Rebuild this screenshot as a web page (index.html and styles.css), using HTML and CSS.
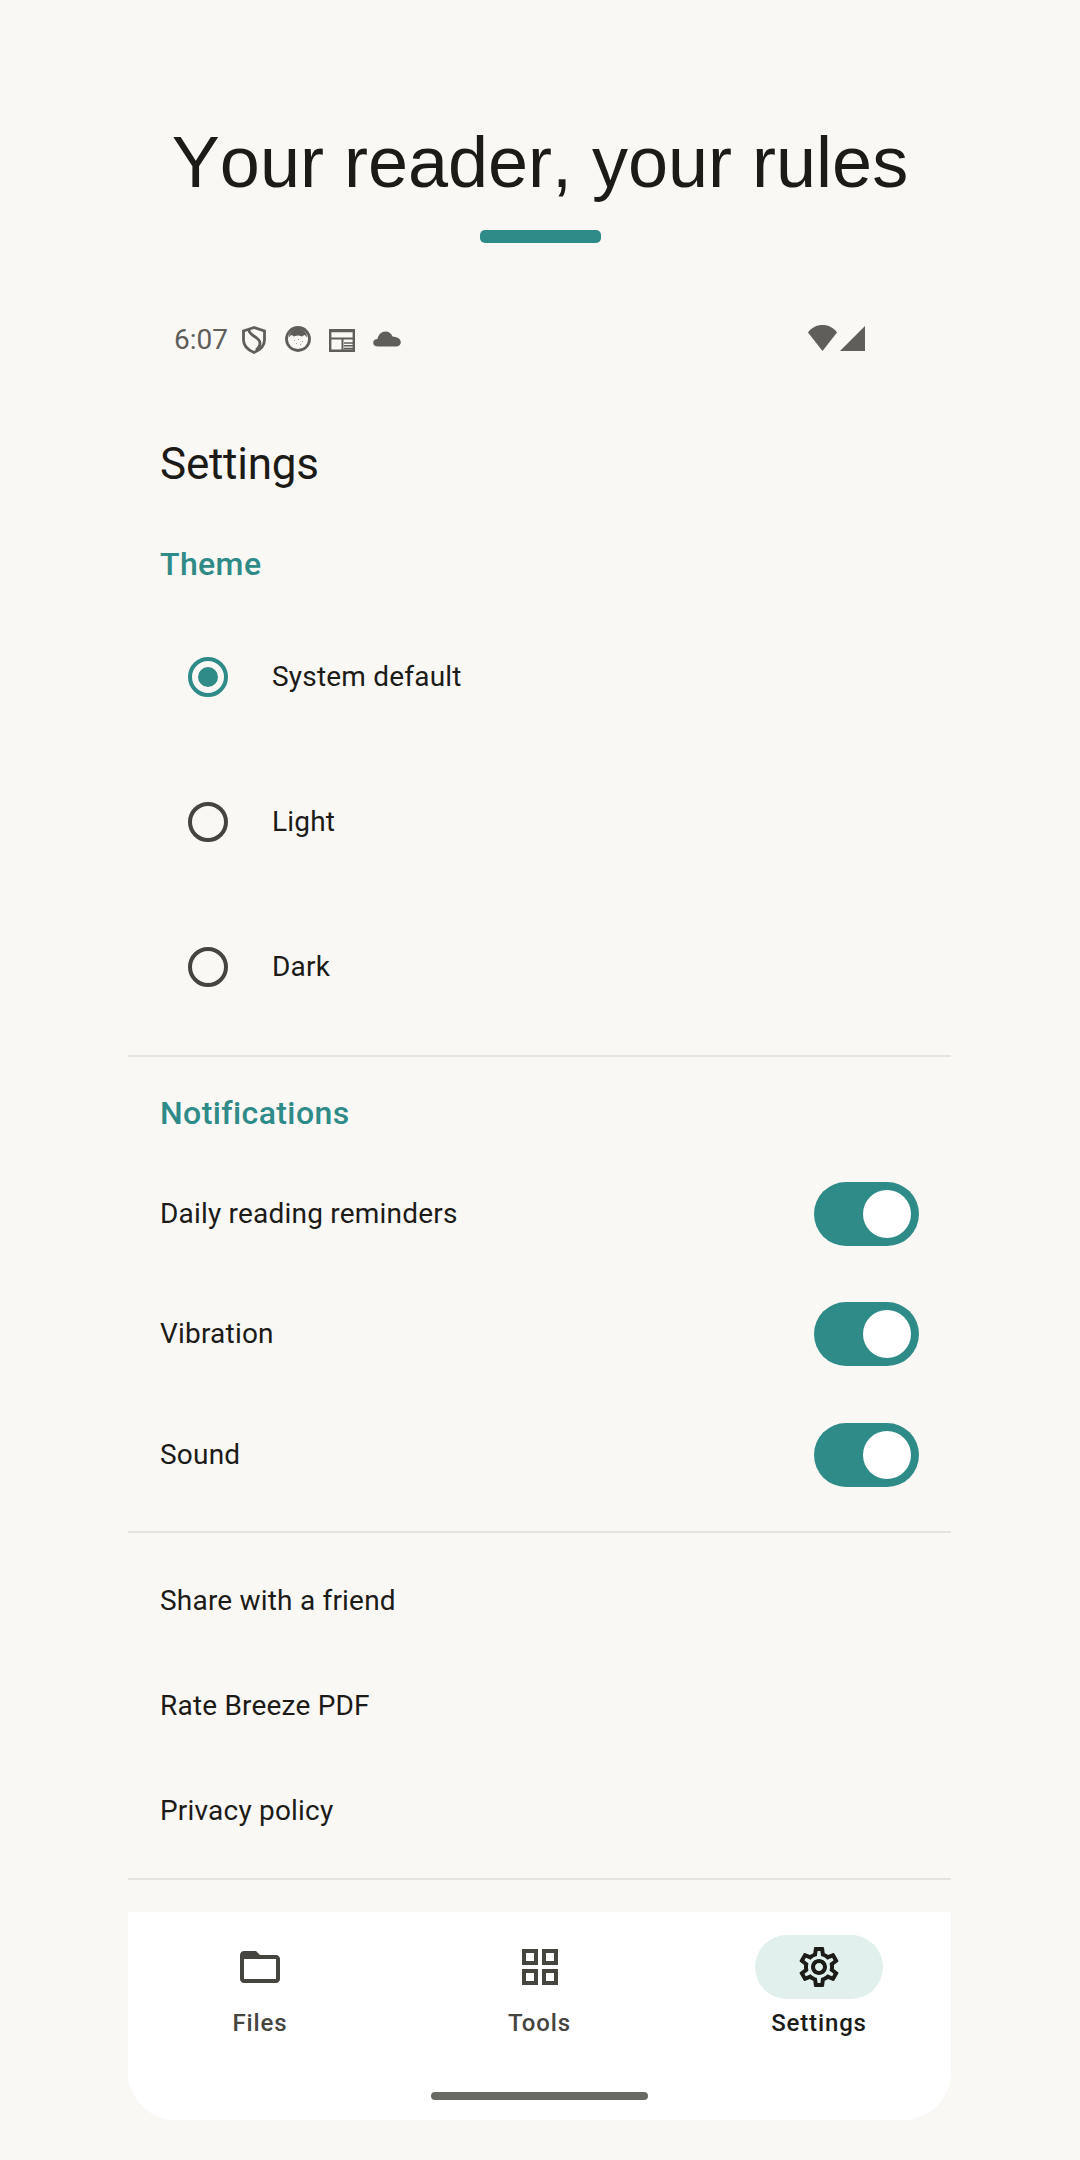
FILE: index.html
```html
<!DOCTYPE html>
<html lang="en">
<head>
<meta charset="utf-8">
<title>Your reader, your rules</title>
<link rel="stylesheet" href="styles.css">
</head>
<body>
<header class="hero">
  <h1 class="hero-title">Your reader, your rules</h1>
  <div class="hero-bar"></div>
</header>
<main class="phone">
  <div class="status">
    <span class="status-time">6:07</span>
    <svg class="status-icon" viewBox="0 0 24 28"><path d="M12 1.500 1.500 5v9c0 6 4.500 10 10.500 12.500C18 24 22.500 20 22.500 14V5z" fill="none" stroke="#5f5e5a" stroke-width="2.800"/><path d="M7 4c0 6 11 7 11 13 0 3-2 5.500-4 7" fill="none" stroke="#5f5e5a" stroke-width="2.800"/></svg>
    <svg class="status-icon status-face" viewBox="0 0 26 26"><circle cx="13" cy="13" r="11.500" fill="#faf8f5" stroke="#5f5e5a" stroke-width="2.800"/><path d="M4 11c0-4.500 4-8.500 9-8.500s9 4 9 8.500c-1 0-1.500-2-2.500-2s-1.500 1.500-2.500 1.500-1.500-1-4-1-3 1-4 1-1.500-1.500-2.500-1.500S5 11 4 11z" fill="#5f5e5a"/><path d="M9 14h1v1H9zM13 13h1v1h-1zM17 15h1v1h-1zM11 17h1v1h-1zM15 18h1v1h-1z" fill="#a3a29d"/></svg>
    <svg class="status-icon status-cal" viewBox="0 0 26 23"><path d="M1.200 2h23.600v19.800H1.200z" fill="none" stroke="#5f5e5a" stroke-width="2.400"/><path d="M0 0h26v2.500H0zM1 8.500h24v2H1zM12.500 10h2v11h-2zM15 13.200h9v1.600h-9zM15 16h9v1.600h-9zM15 18.800h9v1.600h-9z" fill="#5f5e5a"/></svg>
    <svg class="status-cloud" viewBox="0 0 28 16"><path d="M5 15.500C2 15.500.2 14 .2 11.700c0-2.200 1.800-3.800 4.300-3.800C5.500 3.500 8.500.5 12.500.5c3.500 0 6 2 7 5 4 .3 8.300 2 8.300 5.700 0 2.800-2.300 4.300-5.300 4.300z" fill="#5f5e5a"/></svg>
    <span class="status-spacer"></span>
    <svg class="status-wifi" viewBox="0 0 29 26"><path d="M14.500 26 0 7.500C3.500 2.500 8.500 0 14.500 0S25.500 2.500 29 7.500z" fill="#5f5e5a"/></svg>
    <svg class="status-signal" viewBox="0 0 25 25"><path d="M25 0v25H0z" fill="#5f5e5a"/></svg>
  </div>

  <h2 class="page-title">Settings</h2>

  <section class="group group-theme">
    <h3 class="group-title">Theme</h3>
    <div class="radio-row"><span class="radio radio-on"></span><span class="row-label">System default</span></div>
    <div class="radio-row"><span class="radio"></span><span class="row-label">Light</span></div>
    <div class="radio-row"><span class="radio"></span><span class="row-label">Dark</span></div>
  </section>

  <section class="group group-notify">
    <h3 class="group-title">Notifications</h3>
    <div class="toggle-row"><span class="row-label">Daily reading reminders</span><span class="toggle"><span class="toggle-thumb"></span></span></div>
    <div class="toggle-row"><span class="row-label">Vibration</span><span class="toggle"><span class="toggle-thumb"></span></span></div>
    <div class="toggle-row"><span class="row-label">Sound</span><span class="toggle"><span class="toggle-thumb"></span></span></div>
  </section>

  <section class="group group-links">
    <div class="link-row"><span class="row-label">Share with a friend</span></div>
    <div class="link-row"><span class="row-label">Rate Breeze PDF</span></div>
    <div class="link-row"><span class="row-label">Privacy policy</span></div>
  </section>

  <nav class="nav">
    <div class="nav-items">
      <div class="nav-item">
        <span class="nav-pill">
          <svg class="nav-icon" viewBox="0 0 24 24"><path d="M20 6h-8l-2-2H4c-1.100 0-2 .9-2 2v12c0 1.100.9 2 2 2h16c1.100 0 2-.9 2-2V8c0-1.100-.9-2-2-2zm0 12H4V8h16v10z" fill="#45443f"/></svg>
        </span>
        <span class="nav-label">Files</span>
      </div>
      <div class="nav-item">
        <span class="nav-pill">
          <svg class="nav-icon" viewBox="0 0 24 24"><path d="M3 3v8h8V3H3zm6 6H5V5h4v4zm-6 4v8h8v-8H3zm6 6H5v-4h4v4zm4-16v8h8V3h-8zm6 6h-4V5h4v4zm-6 4v8h8v-8h-8zm6 6h-4v-4h4v4z" fill="#45443f"/></svg>
        </span>
        <span class="nav-label">Tools</span>
      </div>
      <div class="nav-item">
        <span class="nav-pill nav-pill-active">
          <svg class="nav-icon" viewBox="0 0 24 24"><path d="M19.430 12.980c.04-.32.07-.64.07-.98 0-.34-.03-.66-.07-.98l2.110-1.650c.19-.15.24-.42.12-.64l-2-3.460c-.09-.16-.26-.25-.44-.25-.06 0-.12.01-.17.03l-2.490 1c-.52-.4-1.080-.73-1.690-.98l-.38-2.650C14.460 2.180 14.250 2 14 2h-4c-.25 0-.46.18-.49.42l-.38 2.650c-.61.25-1.170.59-1.690.98l-2.490-1c-.06-.02-.12-.03-.18-.03-.17 0-.34.09-.43.25l-2 3.460c-.13.22-.07.49.12.64l2.110 1.650c-.04.32-.07.65-.07.98 0 .33.03.66.07.98l-2.110 1.650c-.19.15-.24.42-.12.64l2 3.460c.09.16.26.25.44.25.06 0 .12-.01.17-.03l2.490-1c.52.4 1.080.73 1.690.98l.38 2.650c.03.24.24.42.49.42h4c.25 0 .46-.18.49-.42l.38-2.650c.61-.25 1.170-.59 1.690-.98l2.490 1c.06.02.12.03.18.03.17 0 .34-.09.43-.25l2-3.460c.12-.22.07-.49-.12-.64l-2.110-1.650zm-1.980-1.710c.04.31.05.52.05.73 0 .21-.02.43-.05.73l-.14 1.130.89.7 1.080.84-.7 1.210-1.270-.51-1.040-.42-.9.68c-.43.32-.84.56-1.250.73l-1.060.43-.16 1.130-.2 1.350h-1.400l-.19-1.350-.16-1.130-1.060-.43c-.43-.18-.83-.41-1.230-.71l-.91-.7-1.060.43-1.270.51-.7-1.210 1.080-.84.89-.7-.14-1.130c-.03-.31-.05-.54-.05-.74s.02-.43.05-.73l.14-1.130-.89-.7-1.080-.84.7-1.210 1.270.51 1.040.42.9-.68c.43-.32.84-.56 1.250-.73l1.060-.43.16-1.130.2-1.350h1.390l.19 1.350.16 1.130 1.060.43c.43.18.83.41 1.230.71l.91.7 1.060-.43 1.270-.51.7 1.210-1.070.85-.89.7.14 1.130zM12 8c-2.210 0-4 1.790-4 4s1.790 4 4 4 4-1.790 4-4-1.790-4-4-4zm0 6c-1.100 0-2-.9-2-2s.9-2 2-2 2 .9 2 2-.9 2-2 2z" fill="#1c1b18"/></svg>
        </span>
        <span class="nav-label nav-label-active">Settings</span>
      </div>
    </div>
    <div class="home-bar"></div>
  </nav>
</main>
</body>
</html>
```
FILE: styles.css
```css
* { box-sizing: border-box; }
html, body { margin: 0; padding: 0; }
body {
  width: 1080px;
  height: 2160px;
  background: #faf8f5;
  color: #1c1b18;
  font-family: Roboto, "Noto Sans", sans-serif;
  overflow: hidden;
}
.hero {
  height: 243px;
  padding-top: 119px;
  display: flex;
  flex-direction: column;
  align-items: center;
}
.hero-title {
  margin: 0;
  height: 86px;
  font: 400 72px/86px "Liberation Sans", Arial, sans-serif;
  font-kerning: none;
  color: #1c1b18;
}
.hero-bar {
  margin-top: 25px;
  width: 121px;
  height: 13px;
  border-radius: 5px;
  background: #2e8b88;
}
.phone {
  width: 823px;
  margin: 0 0 0 128px;
  display: flex;
  flex-direction: column;
}
.status {
  height: 62px;
  margin-top: 66px;
  padding: 0 86px 0 46px;
  display: flex;
  align-items: center;
  gap: 18px;
  color: #5f5e5a;
}
.status-time { font-size: 28px; line-height: 36px; width: 49px; }
.status-icon { width: 26px; height: 28px; }
.status-face { margin-bottom: 2px; }
.status-cal { height: 23px; }
.status-cloud { width: 28px; height: 16px; margin-bottom: 3px; }
.status-spacer { flex: 1; }
.status-wifi { width: 29px; height: 26px; margin-right: -15px; margin-bottom: 4px; }
.status-signal { width: 25px; height: 25px; margin-bottom: 3px; }
.page-title {
  margin: 67px 0 0 32px;
  font-size: 44px;
  line-height: 52px;
  font-weight: 400;
  letter-spacing: -0.25px;
}
.group { border-bottom: 2px solid #e4e3df; }
.group-title {
  margin: 0 0 0 32px;
  color: #2e8b88;
  font-size: 32px;
  line-height: 40px;
  font-weight: 500;
  letter-spacing: 0.4px;
}
.group-theme { margin-top: 54px; height: 512.500px; }
.group-notify { padding-top: 36px; height: 476px; }
.group-links { padding-top: 16px; height: 347px; }
.radio-row {
  height: 145px;
  display: flex;
  align-items: center;
  padding-left: 60px;
}
.group-theme .group-title { margin-bottom: 20px; }
.radio {
  width: 40px;
  height: 40px;
  border: 4.500px solid #45443f;
  border-radius: 50%;
  margin-right: 44px;
  display: flex;
  align-items: center;
  justify-content: center;
}
.radio-on { border-color: #2e8b88; }
.radio-on::after {
  content: "";
  width: 20px;
  height: 20px;
  border-radius: 50%;
  background: #2e8b88;
}
.row-label { font-size: 28px; line-height: 36px; letter-spacing: 0.2px; color: #1c1b18; }
.toggle-row {
  height: 120.500px;
  display: flex;
  align-items: center;
  justify-content: space-between;
  padding: 0 32px;
}
.group-notify .group-title { margin-bottom: 21px; }
.toggle {
  width: 105px;
  height: 64px;
  border-radius: 32px;
  background: #2e8b88;
  display: flex;
  align-items: center;
  justify-content: flex-end;
  padding-right: 8px;
}
.toggle-thumb { width: 48px; height: 48px; border-radius: 50%; background: #fff; }
.link-row {
  height: 105px;
  display: flex;
  align-items: center;
  padding: 0 32px;
}
.nav {
  margin-top: 32px;
  height: 208px;
  background: #fff;
  border-radius: 0 0 48px 48px;
  display: flex;
  flex-direction: column;
  align-items: center;
}
.nav-items {
  width: 100%;
  display: grid;
  grid-template-columns: repeat(3, 279.500px);
  justify-content: center;
  padding-top: 23px;
}
.nav-item { display: flex; flex-direction: column; align-items: center; }
.nav-pill {
  width: 128px;
  height: 64px;
  border-radius: 32px;
  display: flex;
  align-items: center;
  justify-content: center;
}
.nav-pill-active { background: #e1f0ec; }
.nav-icon { width: 48px; height: 48px; }
.nav-label {
  margin-top: 8px;
  font-size: 24px;
  line-height: 32px;
  font-weight: 500;
  letter-spacing: 0.85px;
  color: #45443f;
}
.nav-label-active { color: #1c1b18; }
.home-bar {
  margin-top: 53px;
  width: 217px;
  height: 8px;
  border-radius: 4px;
  background: #6a6964;
}
```
